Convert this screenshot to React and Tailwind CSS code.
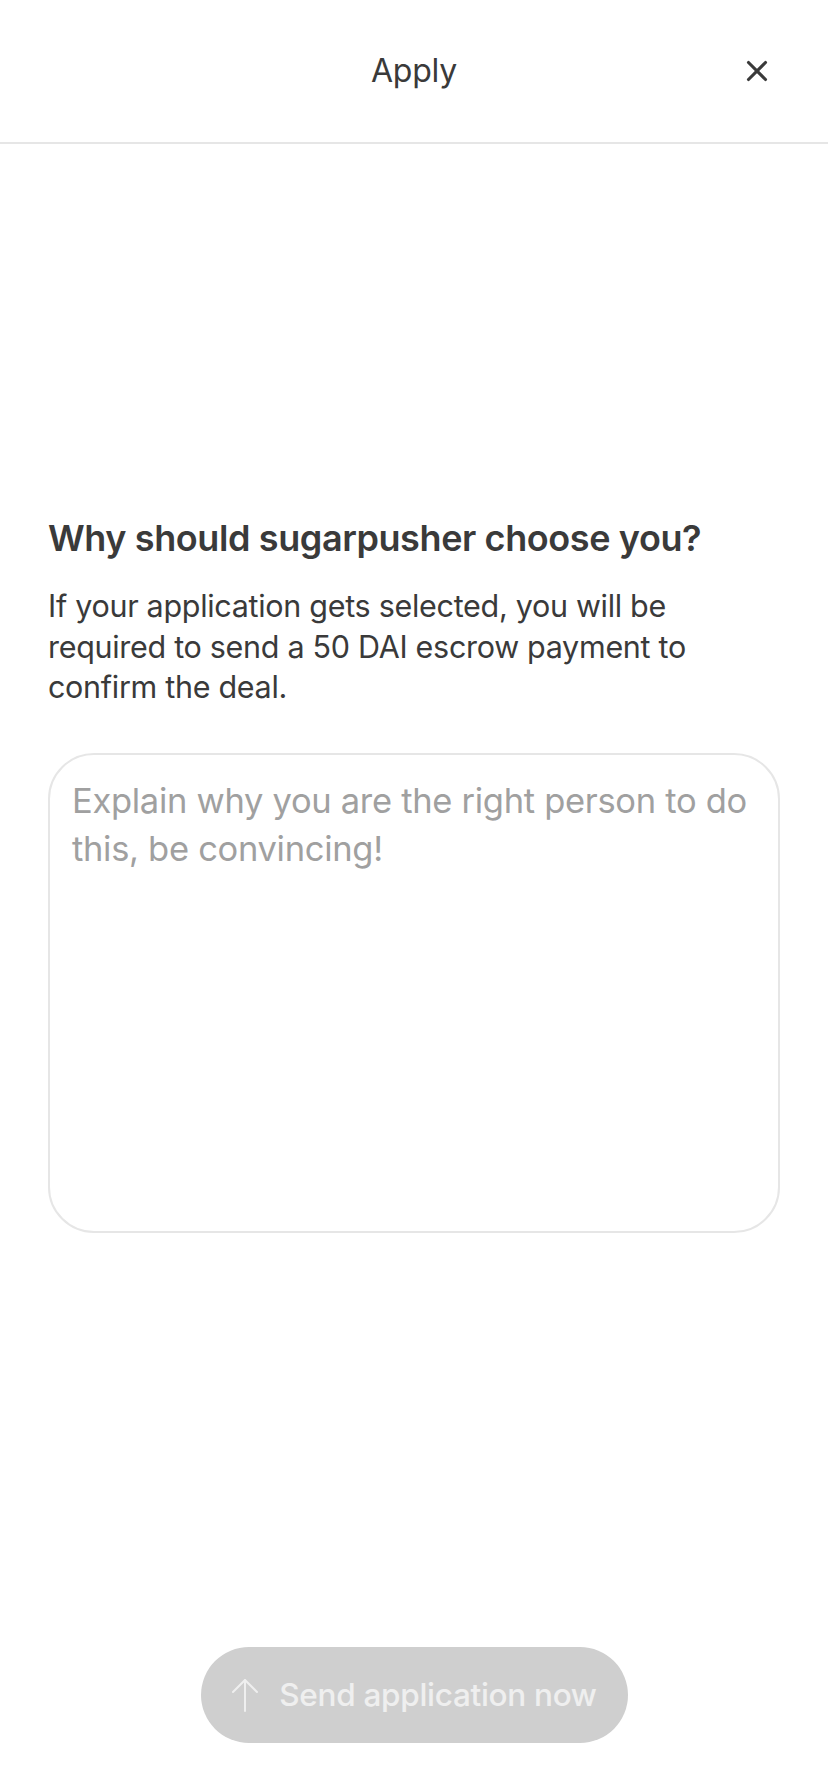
import React from 'react';
import { X } from 'lucide-react';

export default function App() {
  return (
    <div className="flex min-h-screen w-full flex-col bg-white font-['Inter',sans-serif] text-[#3a3a3a]">
      {/* Header */}
      <header className="relative flex h-[144px] items-center justify-center border-b-2 border-[#e6e6e6]">
        <h1 className="text-[32px] font-normal tracking-[-0.2px]">Apply</h1>
        <button className="absolute right-[54px] top-1/2 -translate-y-1/2 text-[#3a3a3a]">
          <X size={34} strokeWidth={2.2} />
        </button>
      </header>

      {/* Body */}
      <main className="flex flex-1 flex-col px-[48px] pt-[372px]">
        <h2 className="text-[36px] font-semibold leading-[44px] tracking-[-0.4px]">
          Why should sugarpusher choose you?
        </h2>
        <p className="mt-[26px] text-[30.5px] leading-[40.5px] tracking-[-0.3px]">
          If your application gets selected, you will be required to send a 50 DAI escrow payment to confirm the deal.
        </p>
        <textarea
          className="mt-[45px] h-[480px] w-full resize-none rounded-[46px] border-2 border-[#e6e6e6] px-[22px] pt-[22px] text-[34.5px] leading-[48px] tracking-[-0.3px] text-[#3a3a3a] outline-none placeholder:text-[#a0a0a0]"
          placeholder="Explain why you are the right person to do this, be convincing!"
        />
      </main>

      {/* Footer button */}
      <div className="flex justify-center pb-[49px] pt-[40px]">
        <button className="flex h-[96px] w-[427px] items-center justify-center gap-[20px] rounded-full bg-[#cfcfcf] text-[31.5px] font-medium tracking-[-0.3px] text-[#efefef]">
          <svg width="28" height="34" viewBox="0 0 28 34" fill="none" stroke="currentColor" strokeWidth="2" strokeLinecap="round" strokeLinejoin="round">
            <path d="M14 33V2" />
            <path d="M2 14L14 2L26 14" />
          </svg>
          <span>Send application now</span>
        </button>
      </div>
    </div>
  );
}
